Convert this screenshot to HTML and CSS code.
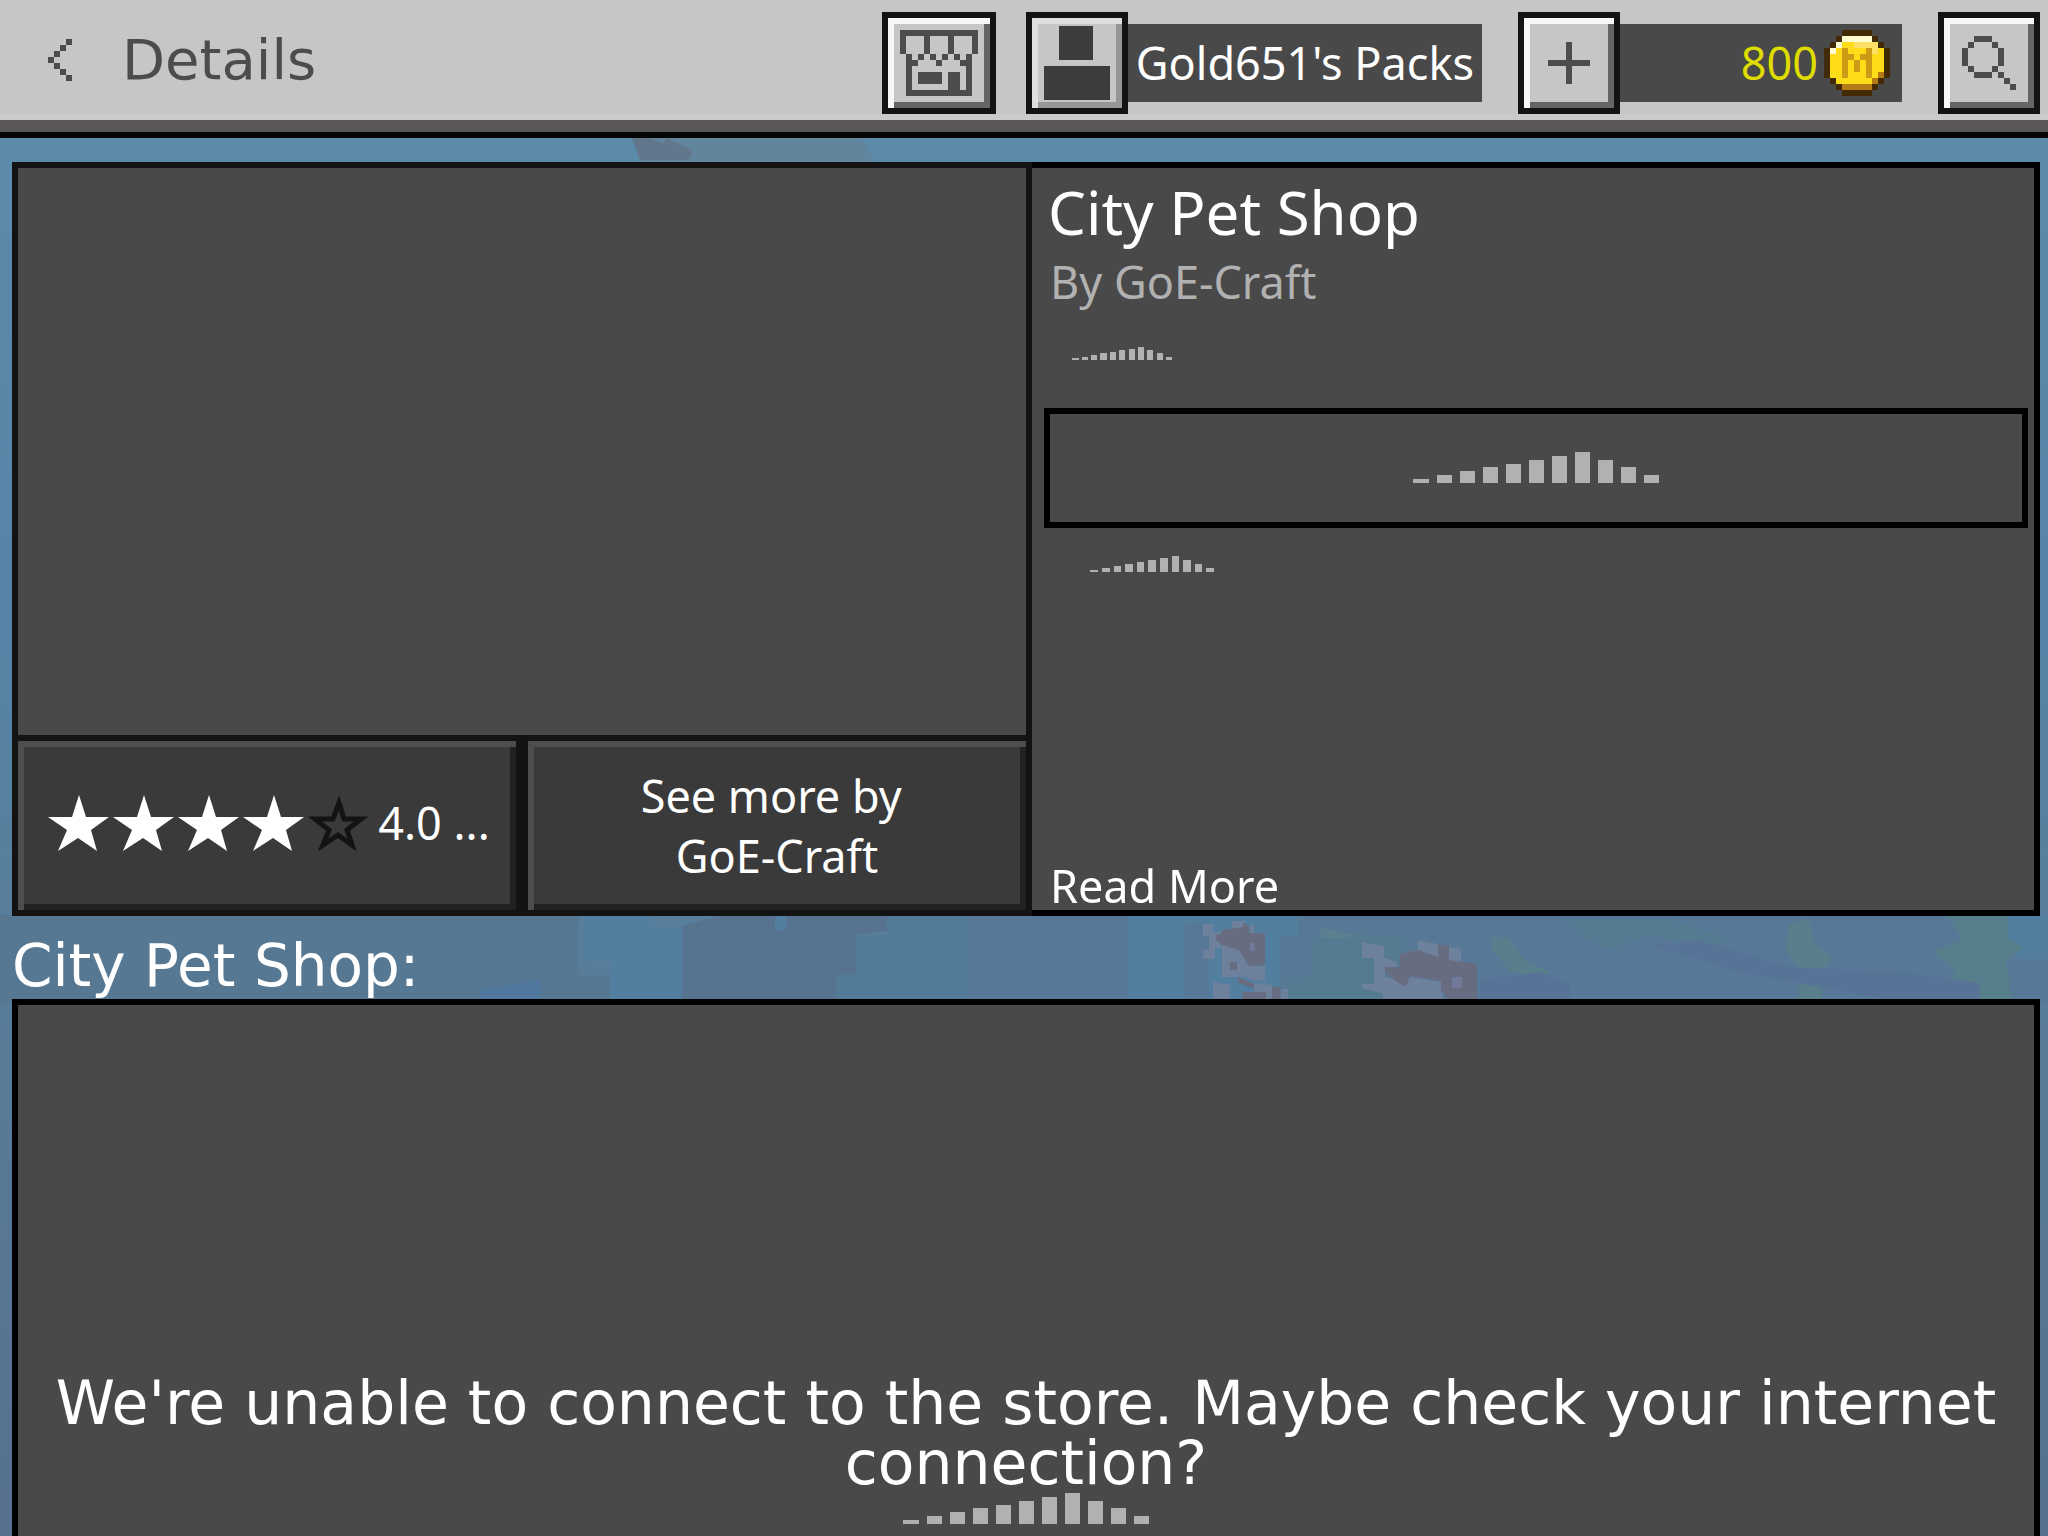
FILE: index.html
```
<!DOCTYPE html>
<html lang="en">
<head>
    <meta charset="UTF-8">
    <meta name="viewport" content="width=device-width, initial-scale=1.0">
    <title>Details</title>
    <link rel="stylesheet" href="styles.css">
</head>
<body>
    <!-- underwater backdrop -->
    <svg class="backdrop" viewBox="0 0 2048 1536" preserveAspectRatio="none" aria-hidden="true">
        <defs>
            <linearGradient id="water" x1="0" y1="0" x2="0" y2="1">
                <stop offset="0" stop-color="#5d8cac"/>
                <stop offset="0.4" stop-color="#5684a6"/>
                <stop offset="0.7" stop-color="#587b97"/>
                <stop offset="1" stop-color="#56708e"/>
            </linearGradient>
        </defs>
        <rect width="2048" height="1536" fill="url(#water)"/>
        <path fill="#60859c" d="M632 138h230l12 24H640z"/>
        <path fill="#62778b" d="M632 138h18l14 6 2-6 26 12v6l-4 4h-48z"/>
        <path fill="#577892" d="M0 915h579v60h31v30H0z"/>
        <path fill="#5179a0" d="M480 990l60-10v20h-60z"/>
        <path fill="#527e9f" d="M584 915h66v12h32v72h-72v-40l-26 2z"/>
        <path fill="#587390" d="M682 926l40-11h165v16l-31 4v66H682z"/>
        <path fill="#527c98" d="M856 935h31v-20h80v90H836v-30h20z"/>
        <path fill="#587898" d="M967 915h1081v90H967z"/>
        <path fill="#527f9f" d="M1128 915h170v22h-18v63h-152zM775 915h11v15h-11zM2000 915h48v44h-30z"/>
        <path fill="#587898" d="M1185 922h24v78h-24z"/>
        <path fill="#557b93" d="M1312 938l40-5 55 2v20l-20 24v20h-105v-20l30-4z"/>
        <path fill="#5b8090" d="M1322 927l30 8-8 4-26-2z"/>
        <path fill="#557b93" d="M1560 918h110l60 20-20 12-60-14-40 14-30-14z"/>
        <path fill="#597f8d" d="M1491 936l18 2 15 22 25 12-8 6-30-6-18-20zM1788 925l20-6 8 26 16 12-10 20v24h-24l2-30-14-20z"/>
        <path fill="#567f8b" d="M1948 915h60v24l16 8-18 14 6 40h-76l20-30-24-20 30-10z"/>
        <path fill="#587398" d="M1480 980l60-8 30 12v16h-90zM1650 945l50-4 90 26 120 6 70 10v17h-90l-150-28z"/>
        <!-- small fish -->
        <g fill="#6d809c">
            <path d="M1203 924h10v8h8v16h-6v11h-12v-9h6v-14h-6z"/>
            <path d="M1232 921h13v10h-13zM1250 925h4v9h-4zM1222 945h18l6 14 3 7h16v14l-12 1-8-4h-23z"/>
            <path d="M1213 982l17 3v14h-17zM1254 983l18 2v14h-18zM1281 989h7v11h-7z"/>
        </g>
        <g fill="#686c80">
            <path d="M1222 930l21-3v-5l6 4v7h16v32l-16 1-10-16-17-5-6-5v-5l6-2zM1230 962h7v8h-7zM1238 977l16 7v4l-16-5zM1242 992h24v8h-24zM1272 987h8v13h-8z"/>
        </g>
        <!-- big fish -->
        <g fill="#6d809c">
            <path d="M1362 942l22 4v12l13 4v8h-12v8h16v22h-18v-6l-21-6v-4h12v-26h-12z"/>
            <path d="M1418 940l20 4v13h-20zM1449 947l12 2v14l-12-3zM1411 977l30 5 2 18h-44v-12z"/>
        </g>
        <g fill="#686c80">
            <path d="M1400 954l18-4 20 7v-12h11v15l28 4v36h-28l-8-10v-9l-31-5-4 11-9-5-12-10v-5h15z"/>
        </g>
        <path fill="#70799a" d="M1452 977h10v11h-10zM1250 943h5v8h-5z"/>
    </svg>

    <header class="topbar">
        <button class="back" aria-label="Back">
            <svg viewBox="0 0 4 7" shape-rendering="crispEdges"><path d="M3 0h1v1H3zM2 1h1v1H2zM1 2h1v1H1zM0 3h1v1H0zM1 4h1v1H1zM2 5h1v1H2zM3 6h1v1H3z"/></svg>
        </button>
        <h1>Details</h1>

        <div class="actions">
            <button class="tile store" aria-label="Store">
                <svg viewBox="0 0 13 11" preserveAspectRatio="none" shape-rendering="crispEdges">
                    <path d="M0 0h13v1H0zM0 1h1v3H0zM4 1h1v3H4zM8 1h1v3H8zM12 1h1v3h-1zM1 4h1v7H1zM11 4h1v7h-1zM2 10h9v1H2zM3 4h1v1H3zM5 4h1v1H5zM7 4h1v1H7zM9 4h1v1H9zM2 5h1v1H2zM6 5h1v1H6zM10 5h1v1h-1zM3 7h4v2H3zM8 7h2v3H8z"/>
                </svg>
            </button>

            <div class="group">
                <button class="tile profile" aria-label="Profile">
                    <svg viewBox="0 0 66 74" shape-rendering="crispEdges"><path d="M15 0h34v34H15zM0 40h66v34H0z"/></svg>
                </button>
                <a class="label" href="#">Gold651's Packs</a>
            </div>

            <div class="group">
                <button class="tile plus" aria-label="Add coins">
                    <svg viewBox="0 0 7 7" shape-rendering="crispEdges"><path d="M3 0h1v3h3v1H4v3H3V4H0V3h3z"/></svg>
                </button>
                <div class="label coins">
                    <span>800</span>
                    <svg viewBox="0 0 11 11" shape-rendering="crispEdges">
                        <path fill="#422a05" d="M3 0h5v1h1v1h1v1h1v5h-1v1H9v1H8v1H3v-1H2V9H1V8H0V3h1V2h1V1h1z"/>
                        <path fill="#ffdc18" d="M3 1h5v1h1v1h1v5H9v1H8v1H3V9H2V8H1V3h1V2h1z"/>
                        <path fill="#fffbd0" d="M3 1h5v1H3zM2 2h1v1H2zM1 3h1v1H1z"/>
                        <path fill="#ffe066" d="M5 2h4v2H8V3H5z"/>
                        <path fill="#b37a18" d="M3 9h5v1H3zM8 8h1v1H8zM9 7h1v1H9z"/>
                        <path fill="#cc9a14" d="M3 3h1v1h1v1h1V4h1V3h1v5H7V5H6v2H5V5H4v3H3z"/>
                    </svg>
                </div>
            </div>

            <button class="tile search" aria-label="Search">
                <svg viewBox="0 0 9 9" shape-rendering="crispEdges"><path d="M2 0h3v1H2zM1 1h1v1H1zM5 1h1v1H5zM0 2h1v3H0zM6 2h1v3H6zM1 5h1v1H1zM5 5h1v1H5zM2 6h3v1H2zM6 6h1v1H6zM7 7h1v1H7zM8 8h1v1H8z"/></svg>
            </button>
        </div>
    </header>

    <main>
        <section class="offer">
            <div class="media">
                <div class="preview"></div>
                <div class="media-buttons">
                    <button class="dark rating" aria-label="Rated 4.0 out of 5">
                        <svg class="stars" viewBox="0 0 322 56">
                            <defs><path id="star" d="M31 0l7 22h23L43 35l6 21-19-13-20 13 9-21L0 22h24z"/></defs>
                            <g fill="#fff">
                                <use href="#star"/>
                                <use href="#star" x="65"/>
                                <use href="#star" x="130"/>
                                <use href="#star" x="195"/>
                            </g>
                            <path fill="none" stroke="#131313" stroke-width="5" d="M291 8l5 16h17l-14 11 5 15-14-10-15 10 6-15-14-11h18z"/>
                        </svg>
                        <span>4.0 ...</span>
                    </button>
                    <button class="dark more">See more by&nbsp;<br>GoE-Craft</button>
                </div>
            </div>

            <div class="info">
                <h2>City Pet Shop</h2>
                <p class="author">By GoE-Craft</p>
                <svg class="bars bars-small"><use href="#bars"/></svg>
                <div class="price">
                    <svg class="bars" viewBox="0 0 246 31" shape-rendering="crispEdges">
                        <symbol id="bars" viewBox="0 0 246 31"><path d="M0 27h16v4H0zM24 23h15v8H24zM47 19h15v12H47zM70 15h15v16H70zM93 12h15v19H93zM116 8h15v23h-15zM139 4h15v27h-15zM162 0h15v31h-15zM185 8h15v23h-15zM208 15h15v16h-15zM231 23h15v8h-15z"/></symbol>
                        <use href="#bars"/>
                    </svg>
                </div>
                <svg class="bars bars-medium"><use href="#bars"/></svg>
                <a class="read-more" href="#">Read More</a>
            </div>
        </section>

        <h2 class="section-title">City Pet Shop:</h2>

        <section class="related">
            <p>We're unable to connect to the store. Maybe check your internet connection?</p>
            <svg class="bars"><use href="#bars"/></svg>
        </section>
    </main>
</body>
</html>
```
FILE: styles.css
```
* {
    box-sizing: border-box;
}

body {
    margin: 0;
    min-height: 100vh;
    display: flex;
    flex-direction: column;
    background: #5b85a4;
    color: #fff;
    font-family: "Noto Sans", "Open Sans", sans-serif;
    font-size: 45px;
    line-height: 60px;
    overflow: hidden;
}

h1, h2, p {
    margin: 0;
    font-weight: normal;
}

button {
    margin: 0;
    padding: 0;
    border: none;
    font: inherit;
    color: inherit;
    cursor: pointer;
}

a {
    color: inherit;
    text-decoration: none;
}

svg {
    display: block;
}

.backdrop {
    position: fixed;
    inset: 0;
    width: 100%;
    height: 100%;
    z-index: -1;
}

/* top bar */
.topbar {
    display: flex;
    align-items: center;
    height: 138px;
    padding: 0 8px 12px 36px;
    background: #c6c6c6;
    border-bottom: 6px solid #060606;
    box-shadow: inset 0 -12px #5a565a, inset 0 -18px #c9cacc;
}

.back {
    padding: 0 12px;
    background: none;
}

.back svg {
    width: 24px;
    height: 42px;
    fill: #4c4c4c;
}

h1 {
    margin-left: 38px;
    color: #4c4c4c;
    font-family: "DejaVu Sans", sans-serif;
    font-size: 56px;
}

.actions {
    display: flex;
    gap: 30px;
    margin-top: 6px;
    margin-left: auto;
}

.group {
    display: flex;
    align-items: center;
    margin-right: 6px;
}

.tile {
    display: flex;
    align-items: center;
    justify-content: center;
    width: 102px;
    height: 102px;
    background: #c6c6c6;
    border: 6px solid #131313;
    box-shadow: inset 6px 6px #f7f7f7, inset -6px -6px #656565;
    fill: #4c4c4c;
}

.store {
    width: 114px;
}

.store svg {
    width: 78px;
    height: 66px;
}

.profile {
    box-shadow: inset 6px 6px #dedede, inset -6px -6px #969696;
    fill: #3c3c3c;
}

.profile svg {
    width: 66px;
    height: 74px;
}

.plus svg {
    width: 42px;
    height: 42px;
}

.search svg {
    width: 54px;
    height: 54px;
}

.label {
    display: flex;
    align-items: center;
    height: 78px;
    padding: 0 8px;
    background: #494949;
}

.coins {
    justify-content: flex-end;
    gap: 6px;
    width: 282px;
    padding-right: 12px;
    color: #dfdc00;
}

.coins svg {
    width: 66px;
    height: 66px;
}

/* offer details */
main {
    flex: 1;
    display: flex;
    flex-direction: column;
    padding: 24px 8px 0 12px;
}

.offer {
    display: flex;
    height: 754px;
}

.media {
    flex: 0 0 1020px;
    display: flex;
    flex-direction: column;
    background: #131313;
    border: 6px solid #131313;
}

.preview {
    flex: 1;
    background: #494949;
}

.media-buttons {
    display: grid;
    grid-template-columns: 1fr 1fr;
    gap: 12px;
    height: 175px;
    padding-top: 6px;
}

.dark {
    background: #3a3a3a;
    box-shadow: inset 6px 6px #4e4e4e, inset -6px -6px #212121;
}

.rating {
    display: flex;
    align-items: center;
    justify-content: center;
    gap: 8px;
    padding: 0 0 6px 4px;
}

.stars {
    width: 322px;
    height: 56px;
}

.info {
    flex: 1;
    display: flex;
    flex-direction: column;
    padding: 10px 6px 0 12px;
    background: #494949;
    border: 6px solid #000;
    border-left: none;
}

.info h2 {
    margin-bottom: 6px;
    padding-left: 4px;
    font-size: 60px;
    line-height: 68px;
}

.author {
    padding-left: 6px;
    color: #b1b1b1;
}

.bars {
    width: 246px;
    height: 31px;
    fill: #b1b1b1;
    shape-rendering: crispEdges;
}

.bars-small {
    width: 100px;
    height: 13px;
    margin: 35px 28px 48px;
}

.price {
    display: flex;
    align-items: center;
    justify-content: center;
    height: 120px;
    padding-bottom: 2px;
    border: 6px solid #000;
}

.bars-medium {
    width: 124px;
    height: 16px;
    margin: 28px 46px;
}

.read-more {
    margin-top: auto;
    padding-left: 6px;
    line-height: 48px;
}

/* related packs */
.section-title {
    height: 83px;
    padding-top: 20px;
    font-family: "DejaVu Sans", sans-serif;
    font-size: 58px;
}

.related {
    flex: 1;
    display: flex;
    flex-direction: column;
    align-items: center;
    justify-content: flex-end;
    padding-bottom: 12px;
    background: #494949;
    border: 6px solid #000;
    border-bottom: none;
    font-family: "DejaVu Sans", sans-serif;
    font-size: 60px;
    text-align: center;
}
```
